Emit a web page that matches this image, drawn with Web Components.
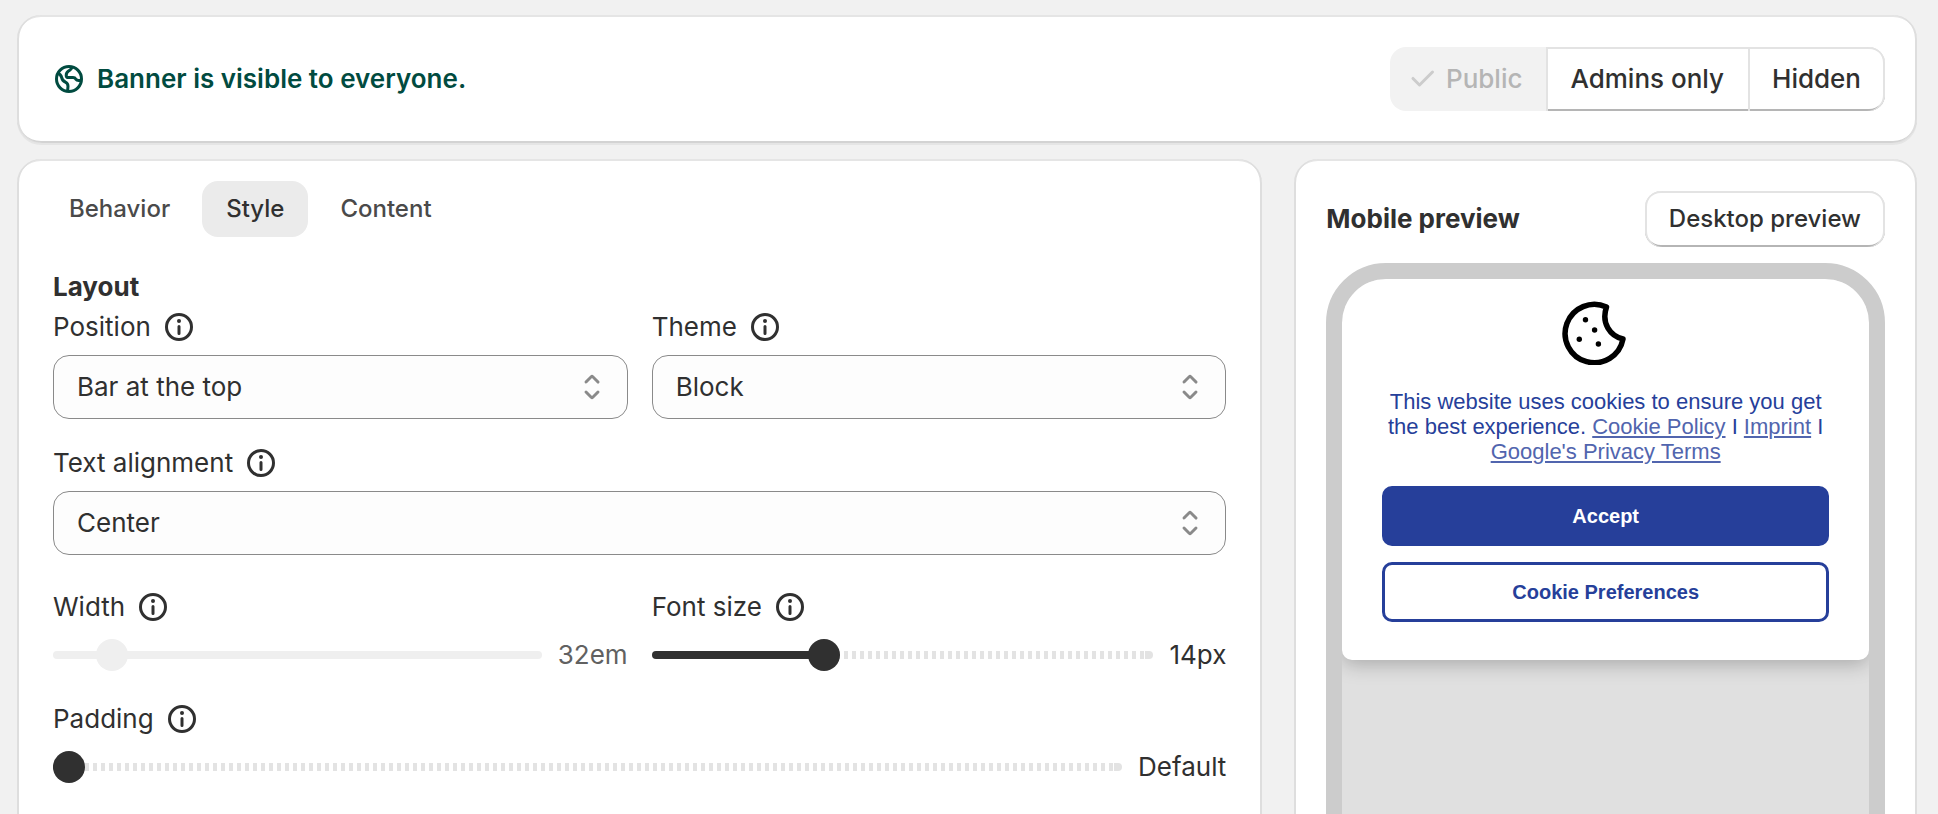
<!DOCTYPE html>
<html lang="en">
<head>
<meta charset="utf-8">
<title>Cookie banner settings</title>
<style>
    body {
        margin: 0;
        background: #f1f1f1;
        color: #303030;
        font-family: Inter, "Liberation Sans", sans-serif;
        font-size: 26px;
        font-weight: 400;
        line-height: 40px;
    }
</style>
</head>
<body>

<banner-settings>
    <ui-card slot="status" class="status">
        <status-message>Banner is visible to everyone.</status-message>
        <button-group></button-group>
    </ui-card>

    <ui-card slot="settings">
        <tab-list></tab-list>
        <settings-form>
            <select-field slot="layout" label="Position"><option>Bar at the top</option></select-field>
            <select-field slot="layout" label="Theme"><option>Block</option></select-field>
            <select-field slot="layout" label="Text alignment" wide><option>Center</option></select-field>
            <range-field slot="sizes" label="Width" min="26" max="90" value="32" output="32em" disabled></range-field>
            <range-field slot="sizes" label="Font size" min="10" max="22" value="14" output="14px"></range-field>
            <range-field slot="sizes" label="Padding" min="0" max="40" value="0" output="Default" wide></range-field>
        </settings-form>
    </ui-card>

    <ui-card slot="preview">
        <preview-header>Mobile preview</preview-header>
        <phone-frame>
            <cookie-banner></cookie-banner>
        </phone-frame>
    </ui-card>
</banner-settings>

<script>
(
    function () {

        const ICONS = {
            info: '<path d="M10 14a.75.75 0 0 1-.75-.75v-3.5a.75.75 0 0 1 1.5 0v3.5a.75.75 0 0 1-.75.75Z"/><circle cx="10" cy="7" r="1"/><path fill-rule="evenodd" d="M17 10a7 7 0 1 1-14 0 7 7 0 0 1 14 0Zm-1.5 0a5.5 5.5 0 1 1-11 0 5.5 5.5 0 0 1 11 0Z"/>',
            check: '<path d="M15.78 5.97a.75.75 0 0 1 0 1.06l-6.5 6.5a.75.75 0 0 1-1.06 0l-3.25-3.25a.75.75 0 1 1 1.06-1.06l2.72 2.72 5.97-5.97a.75.75 0 0 1 1.06 0Z"/>',
            select: '<path d="M10.884 4.323a1.25 1.25 0 0 0-1.768 0l-2.646 2.647a.75.75 0 0 0 1.06 1.06l2.47-2.47 2.47 2.47a.75.75 0 1 0 1.06-1.06l-2.646-2.647Z"/><path d="m13.53 13.03-2.646 2.647a1.25 1.25 0 0 1-1.768 0l-2.646-2.647a.75.75 0 0 1 1.06-1.06l2.47 2.47 2.47-2.47a.75.75 0 0 1 1.06 1.06Z"/>',
            globe: '<g fill="none" stroke="currentColor" stroke-width="1.5" stroke-linejoin="round"><circle cx="10" cy="10" r="6.25"/><path d="M4.2 7C5.5 7.5 6.1 8.2 6.3 9.2 6.6 10.8 7.2 11.1 8.2 11.6 9.2 12.1 9.5 12.7 9.5 13.6L9.3 16.2M11.7 4C11.2 5.1 10.6 5.4 9.9 5.9 9 6.5 8.6 7.3 8.6 8.1 8.6 8.9 9 9.3 9.8 9.3H12C13 9.3 13.2 9.7 13.5 10.2 13.9 10.8 14.5 10.9 15.9 10.6"/></g>'
        };

        /**
        * Creates a template that holds the styles and markup of one element
        */
        function makeTemplate(css, html) {
            const template = document.createElement('template');
            template.innerHTML = '<style>* { box-sizing: border-box; } button, select, input { font: inherit; color: inherit; margin: 0; } ' + css + '</style>' + html;
            return template;
        }

        /**
        * Base class, clones the template of the element in its shadow root
        */
        class BaseElement extends HTMLElement {
            constructor() {
                super();
                this.attachShadow({ mode: 'open' });
                this.shadowRoot.appendChild(this.constructor.template.content.cloneNode(true));
            }

            find(selector) {
                return this.shadowRoot.querySelector(selector);
            }
        }

        class UiIcon extends BaseElement {
            static template = makeTemplate(
                ':host { display: block; width: 40px; height: 40px; flex: none; } svg { display: block; width: 100%; height: 100%; fill: currentColor; }',
                '<svg viewBox="0 0 20 20" aria-hidden="true"></svg>'
            );

            connectedCallback() {
                this.find('svg').innerHTML = ICONS[this.getAttribute('name')];
            }
        }

        /* page grid: status on top, settings and preview below */
        class BannerSettings extends BaseElement {
            static template = makeTemplate(`
                :host {
                    display: block;
                    box-sizing: border-box;
                    height: 100vh;
                    overflow: hidden auto;
                    scrollbar-width: none;
                    padding: 15px 21px 16px 17px;
                }
                main { display: flex; flex-direction: column; gap: 16px; }
                .columns { display: grid; grid-template-columns: minmax(0, 2fr) minmax(0, 1fr); gap: 32px; }
            `, `
                <main>
                    <slot name="status"></slot>
                    <div class="columns">
                        <slot name="settings"></slot>
                        <slot name="preview"></slot>
                    </div>
                </main>
            `);
        }

        class UiCard extends BaseElement {
            static template = makeTemplate(`
                :host {
                    display: block;
                    box-sizing: border-box;
                    padding: 32px;
                    border-radius: 24px;
                    background: #fff;
                    box-shadow: 0 2px 0 #e5e5e5, inset 2px 0 #dedede, inset -2px 0 #dedede, inset 0 -2px #d3d3d3, inset 0 2px #e5e5e5;
                }
                :host(.status) { display: flex; align-items: center; justify-content: space-between; }
                :host([slot="settings"]) { padding: 22px 36px 36px; }
            `, '<slot></slot>');
        }

        class StatusMessage extends BaseElement {
            static template = makeTemplate(
                ':host { display: flex; align-items: center; gap: 8px; color: #014b40; font-weight: 600; } p { margin: 0; }',
                '<ui-icon name="globe"></ui-icon><p><slot></slot></p>'
            );
        }

        class ButtonGroup extends BaseElement {
            static template = makeTemplate(`
                :host { display: flex; }
                button {
                    display: flex;
                    align-items: center;
                    height: 64px;
                    padding: 0 24px;
                    border: 0;
                    background: #fff;
                    font-weight: 550;
                    box-shadow: inset 2px 0 #e3e3e3, inset 0 2px #e3e3e3, inset 0 -2px #b5b5b5;
                }
                button:disabled {
                    gap: 4px;
                    padding-left: 12px;
                    border-radius: 16px 0 0 16px;
                    background: #f2f2f2;
                    color: #b5b5b5;
                    box-shadow: none;
                }
                button:last-child {
                    border-radius: 0 16px 16px 0;
                    box-shadow: inset 2px 0 #e3e3e3, inset -2px 0 #e3e3e3, inset 0 2px #e3e3e3, inset 0 -2px #b5b5b5;
                }
                ui-icon { color: #ccc; }
            `, `
                <button type="button" disabled><ui-icon name="check"></ui-icon>Public</button>
                <button type="button">Admins only</button>
                <button type="button">Hidden</button>
            `);
        }

        class TabList extends BaseElement {
            static template = makeTemplate(`
                :host { display: block; margin: 0 -8px; }
                div { display: flex; gap: 8px; }
                button {
                    height: 56px;
                    padding: 0 24px;
                    border: 0;
                    border-radius: 16px;
                    background: none;
                    color: #4a4a4a;
                    font-size: 24px;
                    font-weight: 550;
                }
                button[aria-selected="true"] { background: #ebebeb; color: #303030; }
            `, `
                <div role="tablist">
                    <button type="button" role="tab" aria-selected="false">Behavior</button>
                    <button type="button" role="tab" aria-selected="true">Style</button>
                    <button type="button" role="tab" aria-selected="false">Content</button>
                </div>
            `);
        }

        class SettingsForm extends BaseElement {
            static template = makeTemplate(`
                :host { display: block; padding-top: 30px; }
                h2 { margin: 0; font-size: 26px; font-weight: 650; }
                .grid { display: grid; grid-template-columns: 1fr 1fr; gap: 24px; }
                .grid + .grid { margin-top: 32px; }
            `, `
                <form>
                    <h2>Layout</h2>
                    <div class="grid"><slot name="layout"></slot></div>
                    <div class="grid"><slot name="sizes"></slot></div>
                </form>
            `);
        }

        const FIELD_CSS = `
            :host { display: block; }
            :host([wide]) { grid-column: 1 / -1; }
            .label { display: flex; align-items: center; gap: 8px; margin-bottom: 8px; }
            .label button { padding: 0; border: 0; background: none; }
        `;
        const FIELD_LABEL = '<div class="label"><label for="control"></label><button type="button" aria-label="Help"><ui-icon name="info"></ui-icon></button></div>';

        class SelectField extends BaseElement {
            static template = makeTemplate(FIELD_CSS + `
                .box { display: grid; align-items: center; }
                select, .box ui-icon { grid-area: 1 / 1; }
                .box ui-icon { justify-self: end; margin-right: 16px; color: #8a8a8a; pointer-events: none; }
                select {
                    appearance: none;
                    width: 100%;
                    height: 64px;
                    padding: 0 64px 0 23px;
                    border: 1px solid #8a8a8a;
                    border-radius: 16px;
                    background: #fdfdfd;
                }
            `, FIELD_LABEL + '<div class="box"><select id="control"></select><ui-icon name="select"></ui-icon></div>');

            connectedCallback() {
                this.find('label').textContent = this.getAttribute('label');
                this.find('select').append(...this.querySelectorAll('option'));
            }
        }

        class RangeField extends BaseElement {
            static template = makeTemplate(FIELD_CSS + `
                .row { display: flex; align-items: center; gap: 16px; }
                input {
                    --done: calc(16px + (100% - 32px) * var(--ratio));
                    appearance: none;
                    flex: 1;
                    min-width: 0;
                    height: 32px;
                    background: none;
                }
                input::-webkit-slider-runnable-track {
                    height: 8px;
                    border-radius: 4px;
                    background:
                        linear-gradient(#303030, #303030) 0 0 / var(--done) 100% no-repeat,
                        linear-gradient(#e3e3e3, #e3e3e3) 100% 0 / 8px 100% no-repeat,
                        repeating-linear-gradient(90deg, #e3e3e3 0 4px, #fff 4px 8px);
                }
                input::-webkit-slider-thumb {
                    appearance: none;
                    width: 32px;
                    height: 32px;
                    margin-top: -12px;
                    border-radius: 50%;
                    background: #303030;
                }
                input:disabled::-webkit-slider-runnable-track { background: #efefef; }
                input:disabled::-webkit-slider-thumb { background: #efefef; }
                input:disabled + output { color: #616161; }
            `, FIELD_LABEL + '<div class="row"><input id="control" type="range"><output for="control"></output></div>');

            connectedCallback() {
                const input = this.find('input');
                input.min = this.getAttribute('min');
                input.max = this.getAttribute('max');
                input.value = this.getAttribute('value');
                input.disabled = this.hasAttribute('disabled');
                input.addEventListener('input', () => this.updateTrack());
                this.find('label').textContent = this.getAttribute('label');
                this.find('output').textContent = this.getAttribute('output');
                this.updateTrack();
            }

            updateTrack() {
                const input = this.find('input');
                input.style.setProperty('--ratio', (input.value - input.min) / (input.max - input.min));
            }
        }

        class PreviewHeader extends BaseElement {
            static template = makeTemplate(`
                :host { display: flex; align-items: center; justify-content: space-between; margin-bottom: 16px; }
                h2 { margin: 0; font-size: 26px; font-weight: 650; }
                button {
                    height: 56px;
                    padding: 0 24px;
                    border: 0;
                    border-radius: 16px;
                    background: #fff;
                    font-size: 24px;
                    font-weight: 550;
                    box-shadow: inset 2px 0 #e3e3e3, inset -2px 0 #e3e3e3, inset 0 2px #e3e3e3, inset 0 -2px #b5b5b5;
                }
            `, '<h2><slot></slot></h2><button type="button">Desktop preview</button>');
        }

        class PhoneFrame extends BaseElement {
            static template = makeTemplate(`
                :host {
                    display: block;
                    box-sizing: border-box;
                    aspect-ratio: 9 / 18;
                    border: 16px solid #ccc;
                    border-radius: 60px;
                    background: #e0e0e0;
                    overflow: hidden;
                }
            `, '<slot></slot>');
        }

        class CookieBanner extends BaseElement {
            static template = makeTemplate(`
                :host {
                    display: flex;
                    flex-direction: column;
                    gap: 16px;
                    padding: 22px 40px 38px;
                    border-radius: 0 0 10px 10px;
                    background: #fff;
                    box-shadow: 0 4px 20px rgba(0, 0, 0, .25);
                    color: #263f9a;
                    font-family: "Liberation Sans", sans-serif;
                    font-size: 22px;
                    line-height: 25px;
                    text-align: center;
                }
                svg { align-self: center; width: 64px; height: 64px; margin-right: 24px; }
                p { margin: 8px 0 6px; }
                a { color: #5165ae; text-underline-offset: 2px; }
                button {
                    height: 60px;
                    border: 3px solid #263f9a;
                    border-radius: 10px;
                    background: #fff;
                    font-size: 20px;
                    font-weight: 700;
                }
                .primary { background: #263f9a; color: #fff; }
            `, `
                <svg viewBox="0 0 64 64" aria-hidden="true">
                    <path d="M44.5 6A29.2 29.2 0 1 0 61 38C48 35 39 22 44.5 6Z" fill="none" stroke="#000" stroke-width="5.5" stroke-linejoin="round"/>
                    <circle cx="23.5" cy="18.7" r="2.7"/><circle cx="32.6" cy="29" r="2.7"/>
                    <circle cx="17.3" cy="38.3" r="2.7"/><circle cx="36.4" cy="43" r="2.7"/>
                </svg>
                <p>This website uses cookies to ensure you get the best experience. <a href="#policy">Cookie Policy</a> I <a href="#imprint">Imprint</a> I <a href="#terms">Google's Privacy Terms</a></p>
                <button type="button" class="primary">Accept</button>
                <button type="button">Cookie Preferences</button>
            `);
        }

        window.customElements.define('ui-icon', UiIcon);
        window.customElements.define('ui-card', UiCard);
        window.customElements.define('banner-settings', BannerSettings);
        window.customElements.define('status-message', StatusMessage);
        window.customElements.define('button-group', ButtonGroup);
        window.customElements.define('tab-list', TabList);
        window.customElements.define('settings-form', SettingsForm);
        window.customElements.define('select-field', SelectField);
        window.customElements.define('range-field', RangeField);
        window.customElements.define('preview-header', PreviewHeader);
        window.customElements.define('phone-frame', PhoneFrame);
        window.customElements.define('cookie-banner', CookieBanner);

    }
)();
</script>
</body>
</html>
